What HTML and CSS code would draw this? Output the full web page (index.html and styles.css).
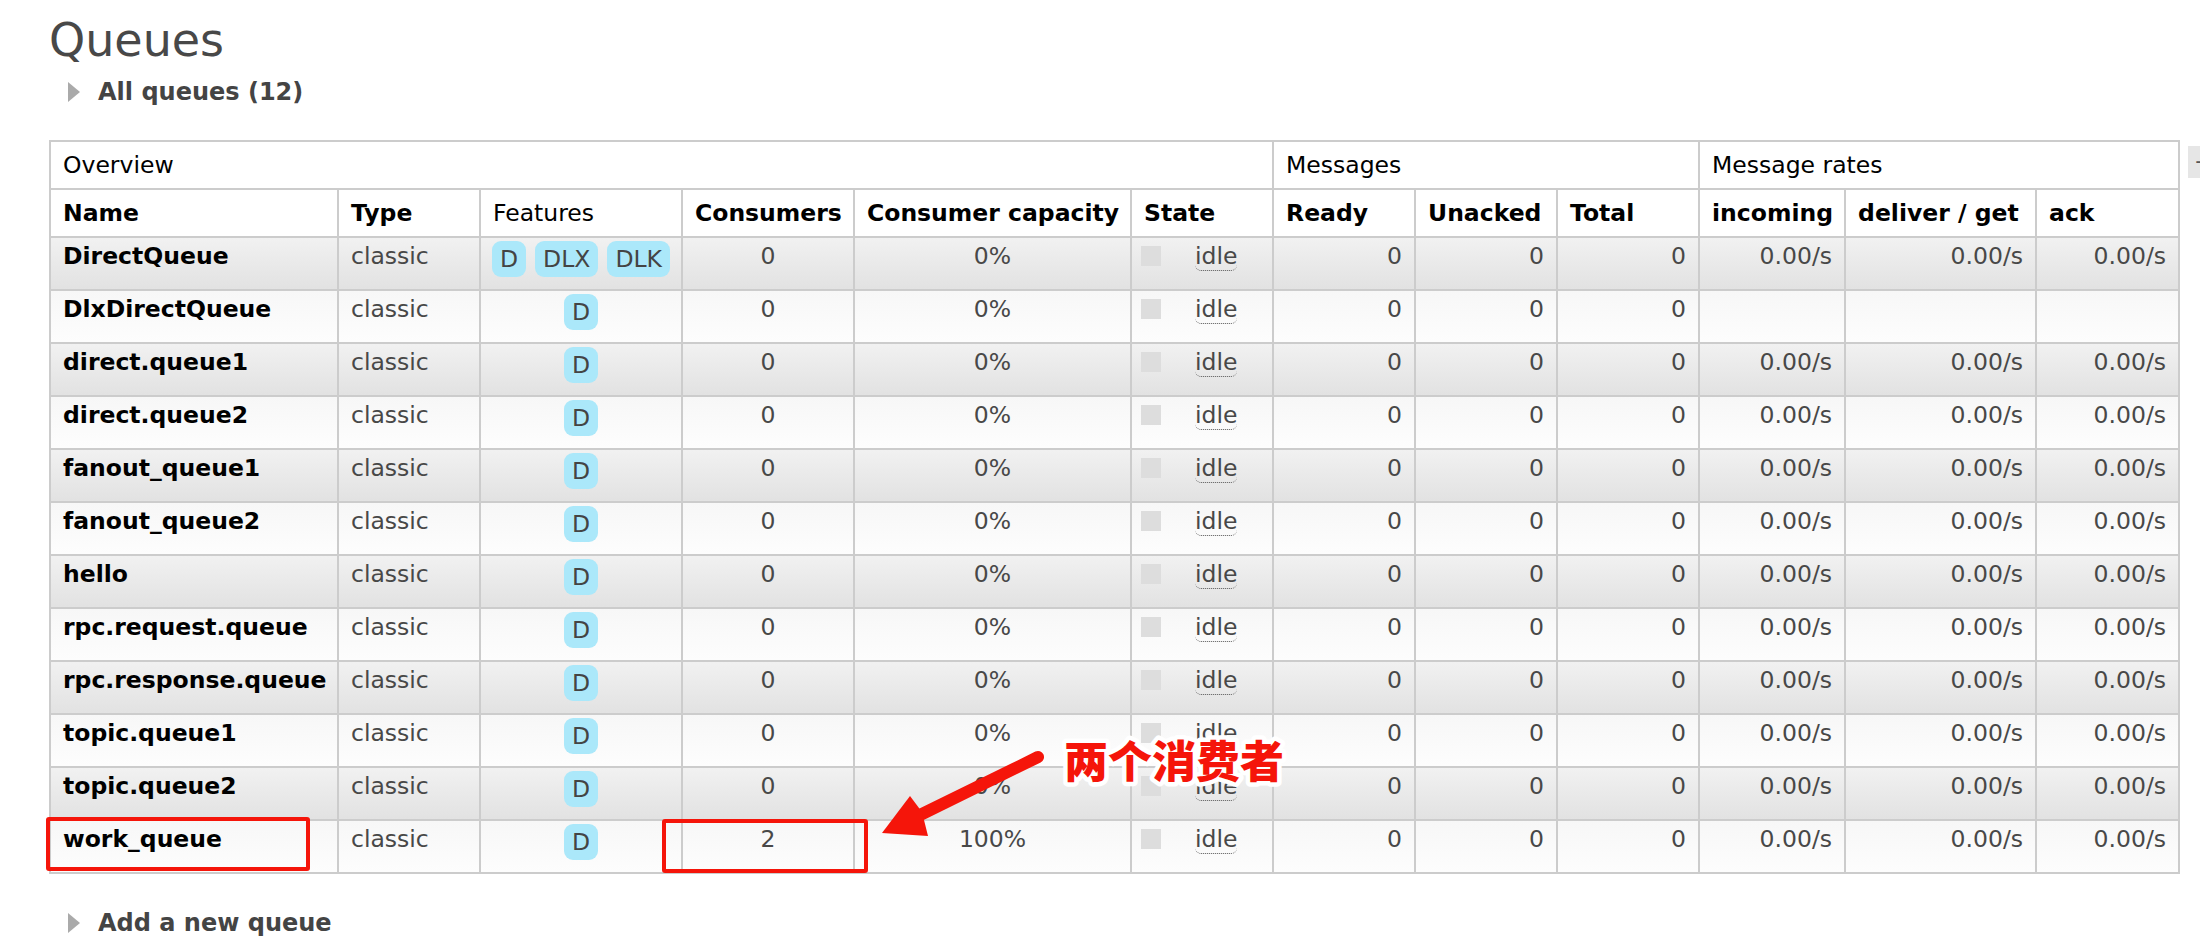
FILE: index.html
```html
<!DOCTYPE html>
<html lang="en">
<head>
<meta charset="utf-8">
<title>Queues</title>
<link rel="stylesheet" href="styles.css">
</head>
<body>
<div class="page">
  <h1 class="title">Queues</h1>
  <h2 class="section"><span class="tri"></span>All queues (12)</h2>

  <div class="table-wrap">
    <table class="list">
      <colgroup>
        <col style="width:288px"><col style="width:142px"><col style="width:202px"><col style="width:172px">
        <col style="width:277px"><col style="width:142px"><col style="width:142px"><col style="width:142px">
        <col style="width:142px"><col style="width:146px"><col style="width:191px"><col style="width:143px">
      </colgroup>
      <thead>
        <tr class="group">
          <th colspan="6">Overview</th>
          <th colspan="3">Messages</th>
          <th colspan="3">Message rates</th>
        </tr>
        <tr class="cols">
          <th>Name</th><th>Type</th><th class="plain">Features</th><th>Consumers</th><th>Consumer capacity</th><th>State</th>
          <th>Ready</th><th>Unacked</th><th>Total</th><th>incoming</th><th>deliver / get</th><th>ack</th>
        </tr>
      </thead>
      <tbody>
        <tr class="alt1">
          <td class="name">DirectQueue</td><td>classic</td>
          <td class="feat"><div class="badges"><span class="badge">D</span><span class="badge">DLX</span><span class="badge">DLK</span></div></td>
          <td class="c">0</td><td class="c">0%</td>
          <td><span class="state"><span class="sq"></span><span class="idle">idle</span></span></td>
          <td class="r">0</td><td class="r">0</td><td class="r">0</td><td class="r">0.00/s</td><td class="r">0.00/s</td><td class="r">0.00/s</td>
        </tr>
        <tr class="alt2">
          <td class="name">DlxDirectQueue</td><td>classic</td>
          <td class="feat"><div class="badges"><span class="badge">D</span></div></td>
          <td class="c">0</td><td class="c">0%</td>
          <td><span class="state"><span class="sq"></span><span class="idle">idle</span></span></td>
          <td class="r">0</td><td class="r">0</td><td class="r">0</td><td class="r"></td><td class="r"></td><td class="r"></td>
        </tr>
        <tr class="alt1">
          <td class="name">direct.queue1</td><td>classic</td>
          <td class="feat"><div class="badges"><span class="badge">D</span></div></td>
          <td class="c">0</td><td class="c">0%</td>
          <td><span class="state"><span class="sq"></span><span class="idle">idle</span></span></td>
          <td class="r">0</td><td class="r">0</td><td class="r">0</td><td class="r">0.00/s</td><td class="r">0.00/s</td><td class="r">0.00/s</td>
        </tr>
        <tr class="alt2">
          <td class="name">direct.queue2</td><td>classic</td>
          <td class="feat"><div class="badges"><span class="badge">D</span></div></td>
          <td class="c">0</td><td class="c">0%</td>
          <td><span class="state"><span class="sq"></span><span class="idle">idle</span></span></td>
          <td class="r">0</td><td class="r">0</td><td class="r">0</td><td class="r">0.00/s</td><td class="r">0.00/s</td><td class="r">0.00/s</td>
        </tr>
        <tr class="alt1">
          <td class="name">fanout_queue1</td><td>classic</td>
          <td class="feat"><div class="badges"><span class="badge">D</span></div></td>
          <td class="c">0</td><td class="c">0%</td>
          <td><span class="state"><span class="sq"></span><span class="idle">idle</span></span></td>
          <td class="r">0</td><td class="r">0</td><td class="r">0</td><td class="r">0.00/s</td><td class="r">0.00/s</td><td class="r">0.00/s</td>
        </tr>
        <tr class="alt2">
          <td class="name">fanout_queue2</td><td>classic</td>
          <td class="feat"><div class="badges"><span class="badge">D</span></div></td>
          <td class="c">0</td><td class="c">0%</td>
          <td><span class="state"><span class="sq"></span><span class="idle">idle</span></span></td>
          <td class="r">0</td><td class="r">0</td><td class="r">0</td><td class="r">0.00/s</td><td class="r">0.00/s</td><td class="r">0.00/s</td>
        </tr>
        <tr class="alt1">
          <td class="name">hello</td><td>classic</td>
          <td class="feat"><div class="badges"><span class="badge">D</span></div></td>
          <td class="c">0</td><td class="c">0%</td>
          <td><span class="state"><span class="sq"></span><span class="idle">idle</span></span></td>
          <td class="r">0</td><td class="r">0</td><td class="r">0</td><td class="r">0.00/s</td><td class="r">0.00/s</td><td class="r">0.00/s</td>
        </tr>
        <tr class="alt2">
          <td class="name">rpc.request.queue</td><td>classic</td>
          <td class="feat"><div class="badges"><span class="badge">D</span></div></td>
          <td class="c">0</td><td class="c">0%</td>
          <td><span class="state"><span class="sq"></span><span class="idle">idle</span></span></td>
          <td class="r">0</td><td class="r">0</td><td class="r">0</td><td class="r">0.00/s</td><td class="r">0.00/s</td><td class="r">0.00/s</td>
        </tr>
        <tr class="alt1">
          <td class="name">rpc.response.queue</td><td>classic</td>
          <td class="feat"><div class="badges"><span class="badge">D</span></div></td>
          <td class="c">0</td><td class="c">0%</td>
          <td><span class="state"><span class="sq"></span><span class="idle">idle</span></span></td>
          <td class="r">0</td><td class="r">0</td><td class="r">0</td><td class="r">0.00/s</td><td class="r">0.00/s</td><td class="r">0.00/s</td>
        </tr>
        <tr class="alt2">
          <td class="name">topic.queue1</td><td>classic</td>
          <td class="feat"><div class="badges"><span class="badge">D</span></div></td>
          <td class="c">0</td><td class="c">0%</td>
          <td><span class="state"><span class="sq"></span><span class="idle">idle</span></span></td>
          <td class="r">0</td><td class="r">0</td><td class="r">0</td><td class="r">0.00/s</td><td class="r">0.00/s</td><td class="r">0.00/s</td>
        </tr>
        <tr class="alt1">
          <td class="name">topic.queue2</td><td>classic</td>
          <td class="feat"><div class="badges"><span class="badge">D</span></div></td>
          <td class="c">0</td><td class="c">0%</td>
          <td><span class="state"><span class="sq"></span><span class="idle">idle</span></span></td>
          <td class="r">0</td><td class="r">0</td><td class="r">0</td><td class="r">0.00/s</td><td class="r">0.00/s</td><td class="r">0.00/s</td>
        </tr>
        <tr class="alt2">
          <td class="name">work_queue</td><td>classic</td>
          <td class="feat"><div class="badges"><span class="badge">D</span></div></td>
          <td class="c">2</td><td class="c">100%</td>
          <td><span class="state"><span class="sq"></span><span class="idle">idle</span></span></td>
          <td class="r">0</td><td class="r">0</td><td class="r">0</td><td class="r">0.00/s</td><td class="r">0.00/s</td><td class="r">0.00/s</td>
        </tr>
      </tbody>
    </table>
    <span class="col-opts">+/-</span>
  </div>

  <h2 class="section add"><span class="tri"></span>Add a new queue</h2>

  <div class="mark mark-name"></div>
  <div class="mark mark-cons"></div>
  <svg class="annot" width="2200" height="948" viewBox="0 0 2200 948" xmlns="http://www.w3.org/2000/svg">
    <line x1="1038" y1="757" x2="918" y2="816" stroke="#f5150a" stroke-width="12" stroke-linecap="round"/>
    <polygon points="882,833 910,796 922,812 928,836" fill="#f5150a"/>
    <text x="1064" y="778" class="annot-text">两个消费者</text>
  </svg>
</div>
</body>
</html>
```

FILE: styles.css
```css
html, body {
  margin: 0;
  padding: 0;
  background: #fff;
  overflow: hidden;
}

body {
  font-family: "DejaVu Sans", Verdana, sans-serif;
  font-size: 23.5px;
  color: #484848;
}

.page {
  position: relative;
  width: 2200px;
  height: 948px;
  padding-left: 49px;
  box-sizing: border-box;
}

.title {
  margin: 0;
  padding-top: 13px;
  font-size: 46px;
  font-weight: normal;
  line-height: 54px;
  color: #484848;
}

.section {
  display: flex;
  align-items: center;
  margin: 11px 0 0 0;
  font-size: 24px;
  font-weight: bold;
  line-height: 28px;
  color: #444;
}

.tri {
  width: 0;
  height: 0;
  border-top: 10px solid transparent;
  border-bottom: 10px solid transparent;
  border-left: 12px solid #aaa;
  margin: 0 18px 0 19px;
}

.table-wrap {
  display: flex;
  align-items: flex-start;
  margin-top: 34px;
}

table.list {
  table-layout: fixed;
  width: 2131px;
  border-collapse: collapse;
  border: 2px solid #ccc;
  flex: none;
}

table.list th,
table.list td {
  border: 2px solid #ccc;
  padding: 0 12px;
  line-height: 27px;
  text-align: left;
  white-space: nowrap;
  overflow: hidden;
}

table.list th {
  height: 48px;
  padding-top: 10px;
  vertical-align: top;
  color: #000;
  background: #fff;
  font-weight: bold;
  box-sizing: border-box;
}

table.list tr.group th,
table.list th.plain {
  font-weight: normal;
}

table.list td {
  height: 53px;
  padding-top: 5px;
  vertical-align: top;
  box-sizing: border-box;
  color: #484848;
}

table.list tr.alt1 td {
  background: linear-gradient(to bottom, #f1f1f1, #e2e2e2);
}

table.list tr.alt2 td {
  background: linear-gradient(to bottom, #f7f7f7, #fdfdfd);
}

table.list td.name {
  font-weight: bold;
  color: #000;
}

table.list td.c {
  text-align: center;
}

table.list td.r {
  text-align: right;
}

table.list td.feat {
  padding-top: 3px;
}

.badges {
  display: flex;
  justify-content: center;
  gap: 9px;
}

.badge {
  display: inline-block;
  height: 36px;
  line-height: 36px;
  padding: 0 8px;
  border-radius: 9px;
  background: #abe8fa;
  color: #444;
}

.state {
  display: flex;
  align-items: center;
  height: 27px;
}

.sq {
  width: 20px;
  height: 20px;
  background: #dddddd;
  margin-left: -3px;
  margin-top: -1px;
}

.idle {
  margin-left: 34px;
  line-height: 27px;
  border-bottom: 1px dotted #555;
  border-radius: 0 0 6px 6px;
}

.col-opts {
  flex: none;
  margin-left: 8px;
  margin-top: 6px;
  height: 32px;
  line-height: 32px;
  padding: 0 6px;
  background: #e6e6e6;
  color: #555;
  font-size: 22px;
}

.section.add {
  margin-top: 35px;
}

.mark {
  position: absolute;
  border: 4px solid #f5150a;
  border-radius: 3px;
  box-sizing: border-box;
}

.mark-name {
  left: 46px;
  top: 817px;
  width: 264px;
  height: 54px;
}

.mark-cons {
  left: 662px;
  top: 819px;
  width: 206px;
  height: 54px;
}

.annot {
  position: absolute;
  left: 0;
  top: 0;
  pointer-events: none;
}

.annot-text {
  font-family: "Noto Sans CJK SC", sans-serif;
  font-weight: 900;
  font-size: 44px;
  fill: #f5150a;
  stroke: #fff;
  stroke-width: 9px;
  stroke-linejoin: round;
  paint-order: stroke fill;
}
```
